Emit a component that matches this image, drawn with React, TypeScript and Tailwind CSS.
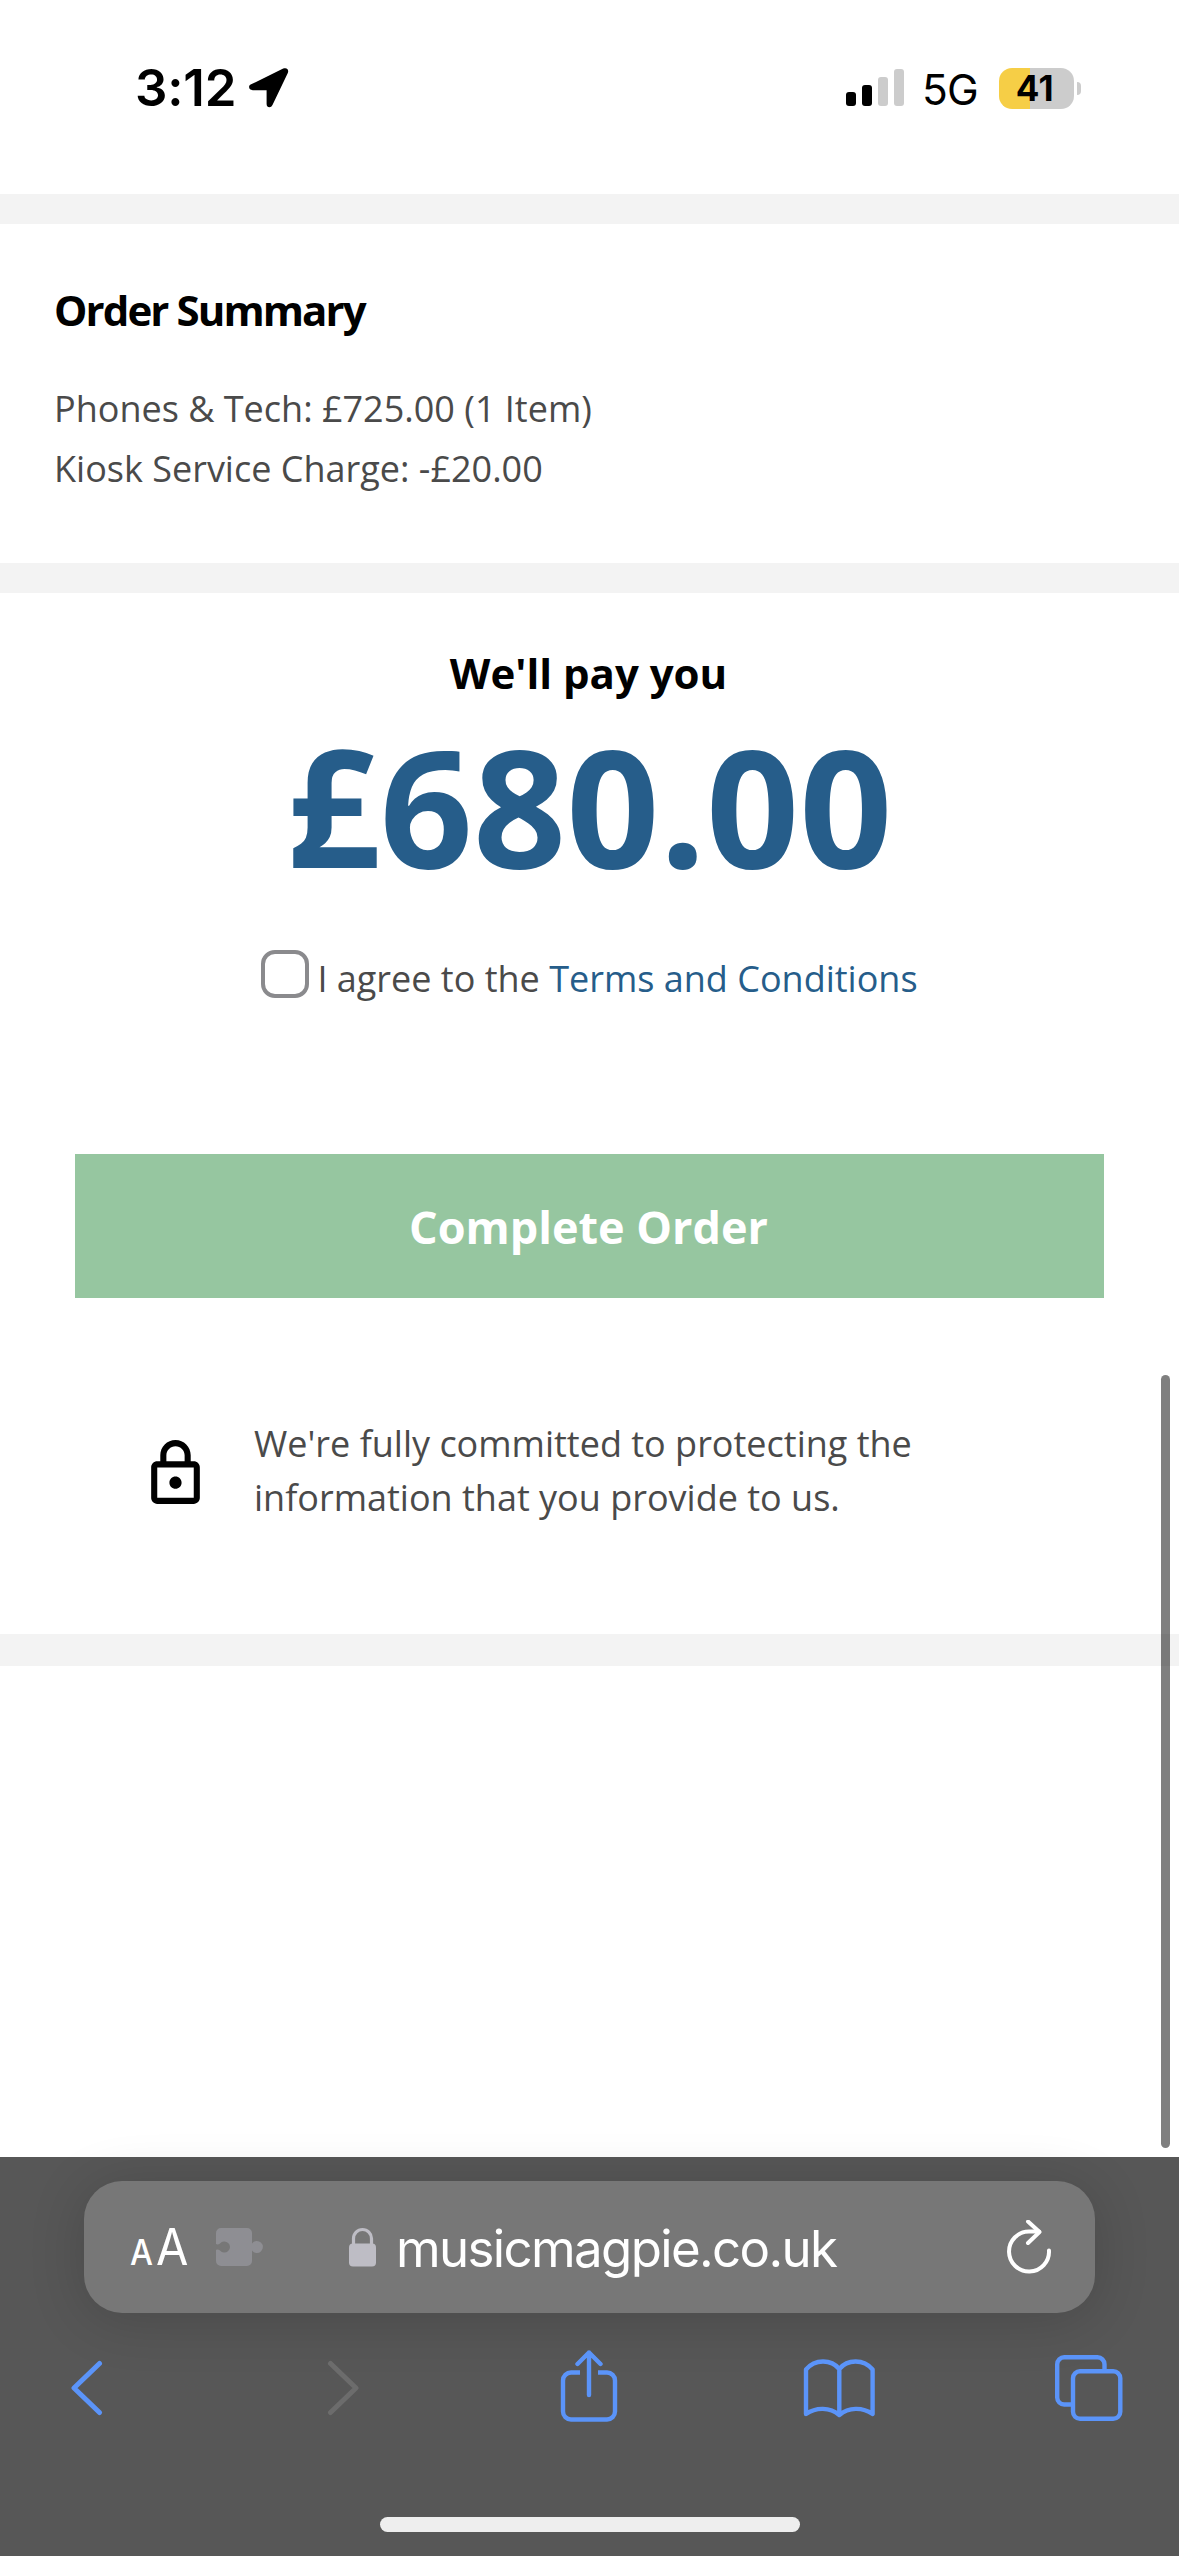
import React, { useState } from "react";
import { MdOutlineLock } from "react-icons/md";

const summaryLines = [
  { label: "Phones & Tech", value: "£725.00 (1 Item)" },
  { label: "Kiosk Service Charge", value: "-£20.00" },
];

const StatusBar: React.FC = () => (
  <header className="flex h-[194px] items-start justify-between bg-white pt-[57px] pl-[135px] pr-[98px] font-['Inter'] text-black">
    <div className="flex h-[62px] items-center gap-[13px]">
      <span className="w-[101px] whitespace-nowrap text-[51px] leading-[62px] font-semibold tracking-[-0.2px]">3:12</span>
      <svg className="h-[40px] w-[40px]" viewBox="0 0 40 40" fill="currentColor">
        <path d="M1.6 16.6 34.2 0.6C37.6-.9 40.2 1.4 38.8 5L23.6 36.8C22 40.6 17.6 39.8 17.6 36V22.2H3.8C-.2 22.2-1 18 1.6 16.6Z" />
      </svg>
    </div>

    <div className="flex h-[62px] items-center">
      <div className="mt-[-1px] flex h-[37px] items-end gap-[6px]">
        <i className="h-[14px] w-[10px] rounded-[3px] bg-black" />
        <i className="h-[21px] w-[10px] rounded-[3px] bg-black" />
        <i className="h-[29px] w-[10px] rounded-[3px] bg-[#cccccc]" />
        <i className="h-[37px] w-[10px] rounded-[3px] bg-[#cccccc]" />
      </div>
      <span className="mt-[3px] ml-[18px] w-[77px] whitespace-nowrap text-[42.5px] leading-[62px] tracking-[-0.8px]">5G</span>
      <div className="flex h-[41px] w-[75px] items-center justify-center rounded-[13px] bg-linear-to-r from-[#f6ce46] from-[41.5%] to-[#cccccc] to-[41.5%]">
        <span className="mr-[3px] text-[35px] leading-[41px] font-bold tracking-[0.6px]">41</span>
      </div>
      <i className="ml-[3px] h-[13px] w-[4px] rounded-r-full bg-[#cccccc]" />
    </div>
  </header>
);

const OrderSummary: React.FC = () => (
  <section className="h-[399px] border-y-[30px] border-[#f3f3f3] bg-white pt-[57px] pl-[54px]">
    <h2 className="text-[42px] leading-[57px] font-bold tracking-[-1.9px] text-black">Order Summary</h2>
    <div className="mt-[41px]">
      {summaryLines.map((line) => (
        <p key={line.label} className="text-[36px] leading-[60px] text-[#4a4a4a]">
          {line.label}: {line.value}
        </p>
      ))}
    </div>
  </section>
);

const Payment: React.FC = () => {
  const [agreed, setAgreed] = useState(false);

  return (
    <section className="flex h-[1073px] flex-col items-center border-b-[32px] border-[#f3f3f3] bg-white pt-[51px]">
      <h3 className="mr-[2px] text-[42px] leading-[57px] font-bold text-black">We'll pay you</h3>
      <p className="mt-[6px] text-[163px] leading-[196px] font-bold text-[#265d8a]">£680.00</p>

      <label className="mt-[46px] flex h-[60px] items-center text-[36px] leading-[60px] whitespace-nowrap text-[#4a4a4a]">
        <input
          type="checkbox"
          checked={agreed}
          onChange={(e) => setAgreed(e.target.checked)}
          className="mr-[8px] mb-[11px] h-[48px] w-[48px] appearance-none rounded-[14px] border-[4px] border-[#8a8a8d] bg-white"
        />
        <span>
          I agree to the <a className="text-[#265d8a]">Terms and Conditions</a>
        </span>
      </label>

      <button className="mt-[145px] h-[144px] w-[1029px] bg-[#96c6a0] pt-[2px] pr-[2px] text-[45px] font-bold text-white">
        Complete Order
      </button>

      <div className="mt-[119px] flex w-full items-center pl-[139px] text-[36px] leading-[54px] text-[#4a4a4a]">
        <MdOutlineLock className="mt-[4px] h-[73px] w-[73px] text-black" />
        <p className="ml-[42px] w-[700px]">
          We're fully committed to protecting the
          <br />
          information that you provide to us.
        </p>
      </div>
    </section>
  );
};

const AddressBar: React.FC = () => (
  <div className="mx-[84px] flex h-[132px] items-center rounded-[38px] bg-[#777777] pl-[46px] pr-[41px] font-['Inter'] text-white shadow-[0_6px_56px_rgba(0,0,0,0.16)]">
    <div className="mt-[4px] flex w-[64px] items-baseline">
      <span className="w-[26px] origin-left scale-x-90 text-[36px] leading-[60px] font-medium">A</span>
      <span className="origin-left scale-x-92 text-[51px] leading-[60px]">A</span>
    </div>
    <svg className="ml-[22px] h-[38px] w-[48px]" viewBox="0 0 48 38" fill="#8e8e93">
      <path d="M5 0h26a5 5 0 0 1 5 5v10.500a6 6 0 1 1 0 7V33a5 5 0 0 1-5 5H5a5 5 0 0 1-5-5V22c1.500-.8 2.600-.3 4 .5a5.600 5.600 0 1 0 0-7C2.600 16.300 1.500 16.800 0 16V5a5 5 0 0 1 5-5Z" />
    </svg>
    <svg className="ml-[85px] h-[40px] w-[27px]" viewBox="0 0 27 40" fill="none">
      <path d="M4.500 18V11.500a9 9 0 0 1 18 0V18" stroke="#bebdc5" strokeWidth="3.200" />
      <rect y="16.500" width="27" height="23" rx="4" fill="#bebdc5" />
    </svg>
    <span className="mt-[3px] ml-[20px] whitespace-nowrap text-[51px] leading-[62px] tracking-[-1.65px]">musicmagpie.co.uk</span>
    <svg
      className="mt-[2px] ml-auto h-[56px] w-[48px]"
      viewBox="0 0 48 56"
      fill="none"
      stroke="currentColor"
      strokeWidth="4"
      strokeLinecap="round"
      strokeLinejoin="round"
    >
      <path d="M43 30.500A20 20 0 1 1 23 11.500H33" />
      <path d="M22 1.500 33.500 12 22 23" />
    </svg>
  </div>
);

const Toolbar: React.FC = () => (
  <nav className="mt-[37px] flex h-[74px] w-full text-[#5b94f9]" aria-label="Browser">
    <svg className="ml-[70px] h-[74px] w-[33px]" viewBox="0 0 33 74" fill="none" stroke="currentColor" strokeWidth="5" strokeLinecap="round" strokeLinejoin="round">
      <path d="M29.500 13.500 4 38l25.500 24.500" />
    </svg>
    <svg className="ml-[224px] h-[74px] w-[33px] text-[#6c6c6c]" viewBox="0 0 33 74" fill="none" stroke="currentColor" strokeWidth="5" strokeLinecap="round" strokeLinejoin="round">
      <path d="M3.500 13.500 29 38 3.500 62.500" />
    </svg>
    <svg className="ml-[200px] h-[74px] w-[58px]" viewBox="0 0 58 74" fill="none" stroke="currentColor" strokeWidth="4.400" strokeLinejoin="round">
      <path d="M20 22.500H11a8 8 0 0 0-8 8V61.500a8 8 0 0 0 8 8h36a8 8 0 0 0 8-8V30.500a8 8 0 0 0-8-8h-9" />
      <path d="M29 45V2.500M17.500 14 29 2.500 40.500 14" strokeLinecap="round" />
    </svg>
    <svg className="ml-[184px] h-[74px] w-[76px]" viewBox="0 0 76 74" fill="none" stroke="currentColor" strokeWidth="4.400" strokeLinejoin="round">
      <path d="M37.300 19C29 9 13 9 4 19.500V64C14 57 28 57 37.300 65C46.600 57 60.600 57 70.600 64V19.500C61.600 9 45.600 9 37.300 19ZM37.300 19V65" />
    </svg>
    <svg className="ml-[177px] h-[74px] w-[70px]" viewBox="0 0 70 74" fill="none" stroke="currentColor" strokeWidth="4.400">
      <path d="M49.500 20V14.300a7 7 0 0 0-7-7H9.200a7 7 0 0 0-7 7V47.500a7 7 0 0 0 7 7H16" />
      <rect x="18" y="21.300" width="47.300" height="47.500" rx="7" />
    </svg>
  </nav>
);

const CheckoutPage: React.FC = () => {
  return (
    <div className="relative h-[2556px] w-[1179px] overflow-hidden bg-white font-['Open_Sans',sans-serif]">
      <StatusBar />
      <OrderSummary />
      <Payment />

      {/* Blank tail of the page above the browser bar */}
      <div className="h-[491px]" />

      <footer className="relative h-[399px] bg-[#575757] pt-[24px]">
        <AddressBar />
        <Toolbar />
        {/* Home indicator */}
        <div className="mx-auto mt-[93px] h-[15px] w-[420px] rounded-full bg-[#eeeeee]" />
      </footer>

      {/* Scroll position */}
      <div className="absolute top-[1375px] right-[9px] h-[773px] w-[9px] rounded-full bg-black/50" />
    </div>
  );
};

export default function App() {
  return <CheckoutPage />;
}
